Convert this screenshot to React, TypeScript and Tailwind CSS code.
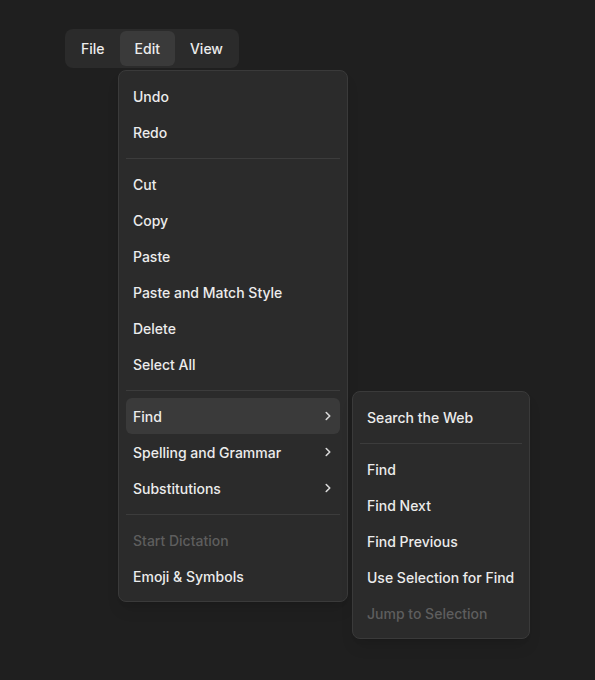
import { ChevronRight } from 'lucide-react';

type Item = { label?: string; sep?: boolean; sub?: boolean; disabled?: boolean; active?: boolean };

const EDIT: Item[] = [
  { label: 'Undo' },
  { label: 'Redo' },
  { sep: true },
  { label: 'Cut' },
  { label: 'Copy' },
  { label: 'Paste' },
  { label: 'Paste and Match Style' },
  { label: 'Delete' },
  { label: 'Select All' },
  { sep: true },
  { label: 'Find', sub: true, active: true },
  { label: 'Spelling and Grammar', sub: true },
  { label: 'Substitutions', sub: true },
  { sep: true },
  { label: 'Start Dictation', disabled: true },
  { label: 'Emoji & Symbols' },
];

const FIND: Item[] = [
  { label: 'Search the Web' },
  { sep: true },
  { label: 'Find' },
  { label: 'Find Next' },
  { label: 'Find Previous' },
  { label: 'Use Selection for Find' },
  { label: 'Jump to Selection', disabled: true },
];

function MenuList({ items }: { items: Item[] }) {
  return (
    <div className="flex flex-col">
      {items.map((it, i) =>
        it.sep ? (
          <div key={i} className="h-px bg-[#3c3c3c] mt-2 mb-[7px]" />
        ) : (
          <div
            key={i}
            className={`h-9 px-[7px] rounded-md flex items-center justify-between whitespace-nowrap text-[14px] font-medium ${
              it.active ? 'bg-[#3a3a3a]' : ''
            } ${it.disabled ? 'text-[#5e5e5e]' : 'text-[#ececec]'}`}
          >
            <span>{it.label}</span>
            {it.sub && (
              <ChevronRight size={14} strokeWidth={2.75} className="text-[#d8d8d8] -mr-[2px]" />
            )}
          </div>
        )
      )}
    </div>
  );
}

export default function App() {
  return (
    <div
      className="min-h-screen w-full bg-[#1f1f1f] relative"
      style={{ fontFamily: 'Inter, "Noto Sans", sans-serif' }}
    >
      {/* Menubar */}
      <div className="absolute left-[65px] top-[29px] flex py-[2px] px-px bg-[#2b2b2b] rounded-lg text-[14px] text-[#ececec] font-medium">
        <div className="h-[35px] px-[15px] flex items-center rounded-md">File</div>
        <div className="h-[35px] px-[15px] flex items-center rounded-md bg-[#3a3a3a]">Edit</div>
        <div className="h-[35px] px-[15px] flex items-center rounded-md">View</div>
      </div>

      {/* Edit menu */}
      <div className="absolute left-[118px] top-[70px] w-[230px] p-[7px] bg-[#2b2b2b] border border-[#3a3a3a] rounded-lg shadow-lg">
        <MenuList items={EDIT} />
      </div>

      {/* Find submenu */}
      <div className="absolute left-[352px] top-[391px] w-[178px] p-[7px] bg-[#2b2b2b] border border-[#3a3a3a] rounded-lg shadow-lg">
        <MenuList items={FIND} />
      </div>
    </div>
  );
}
